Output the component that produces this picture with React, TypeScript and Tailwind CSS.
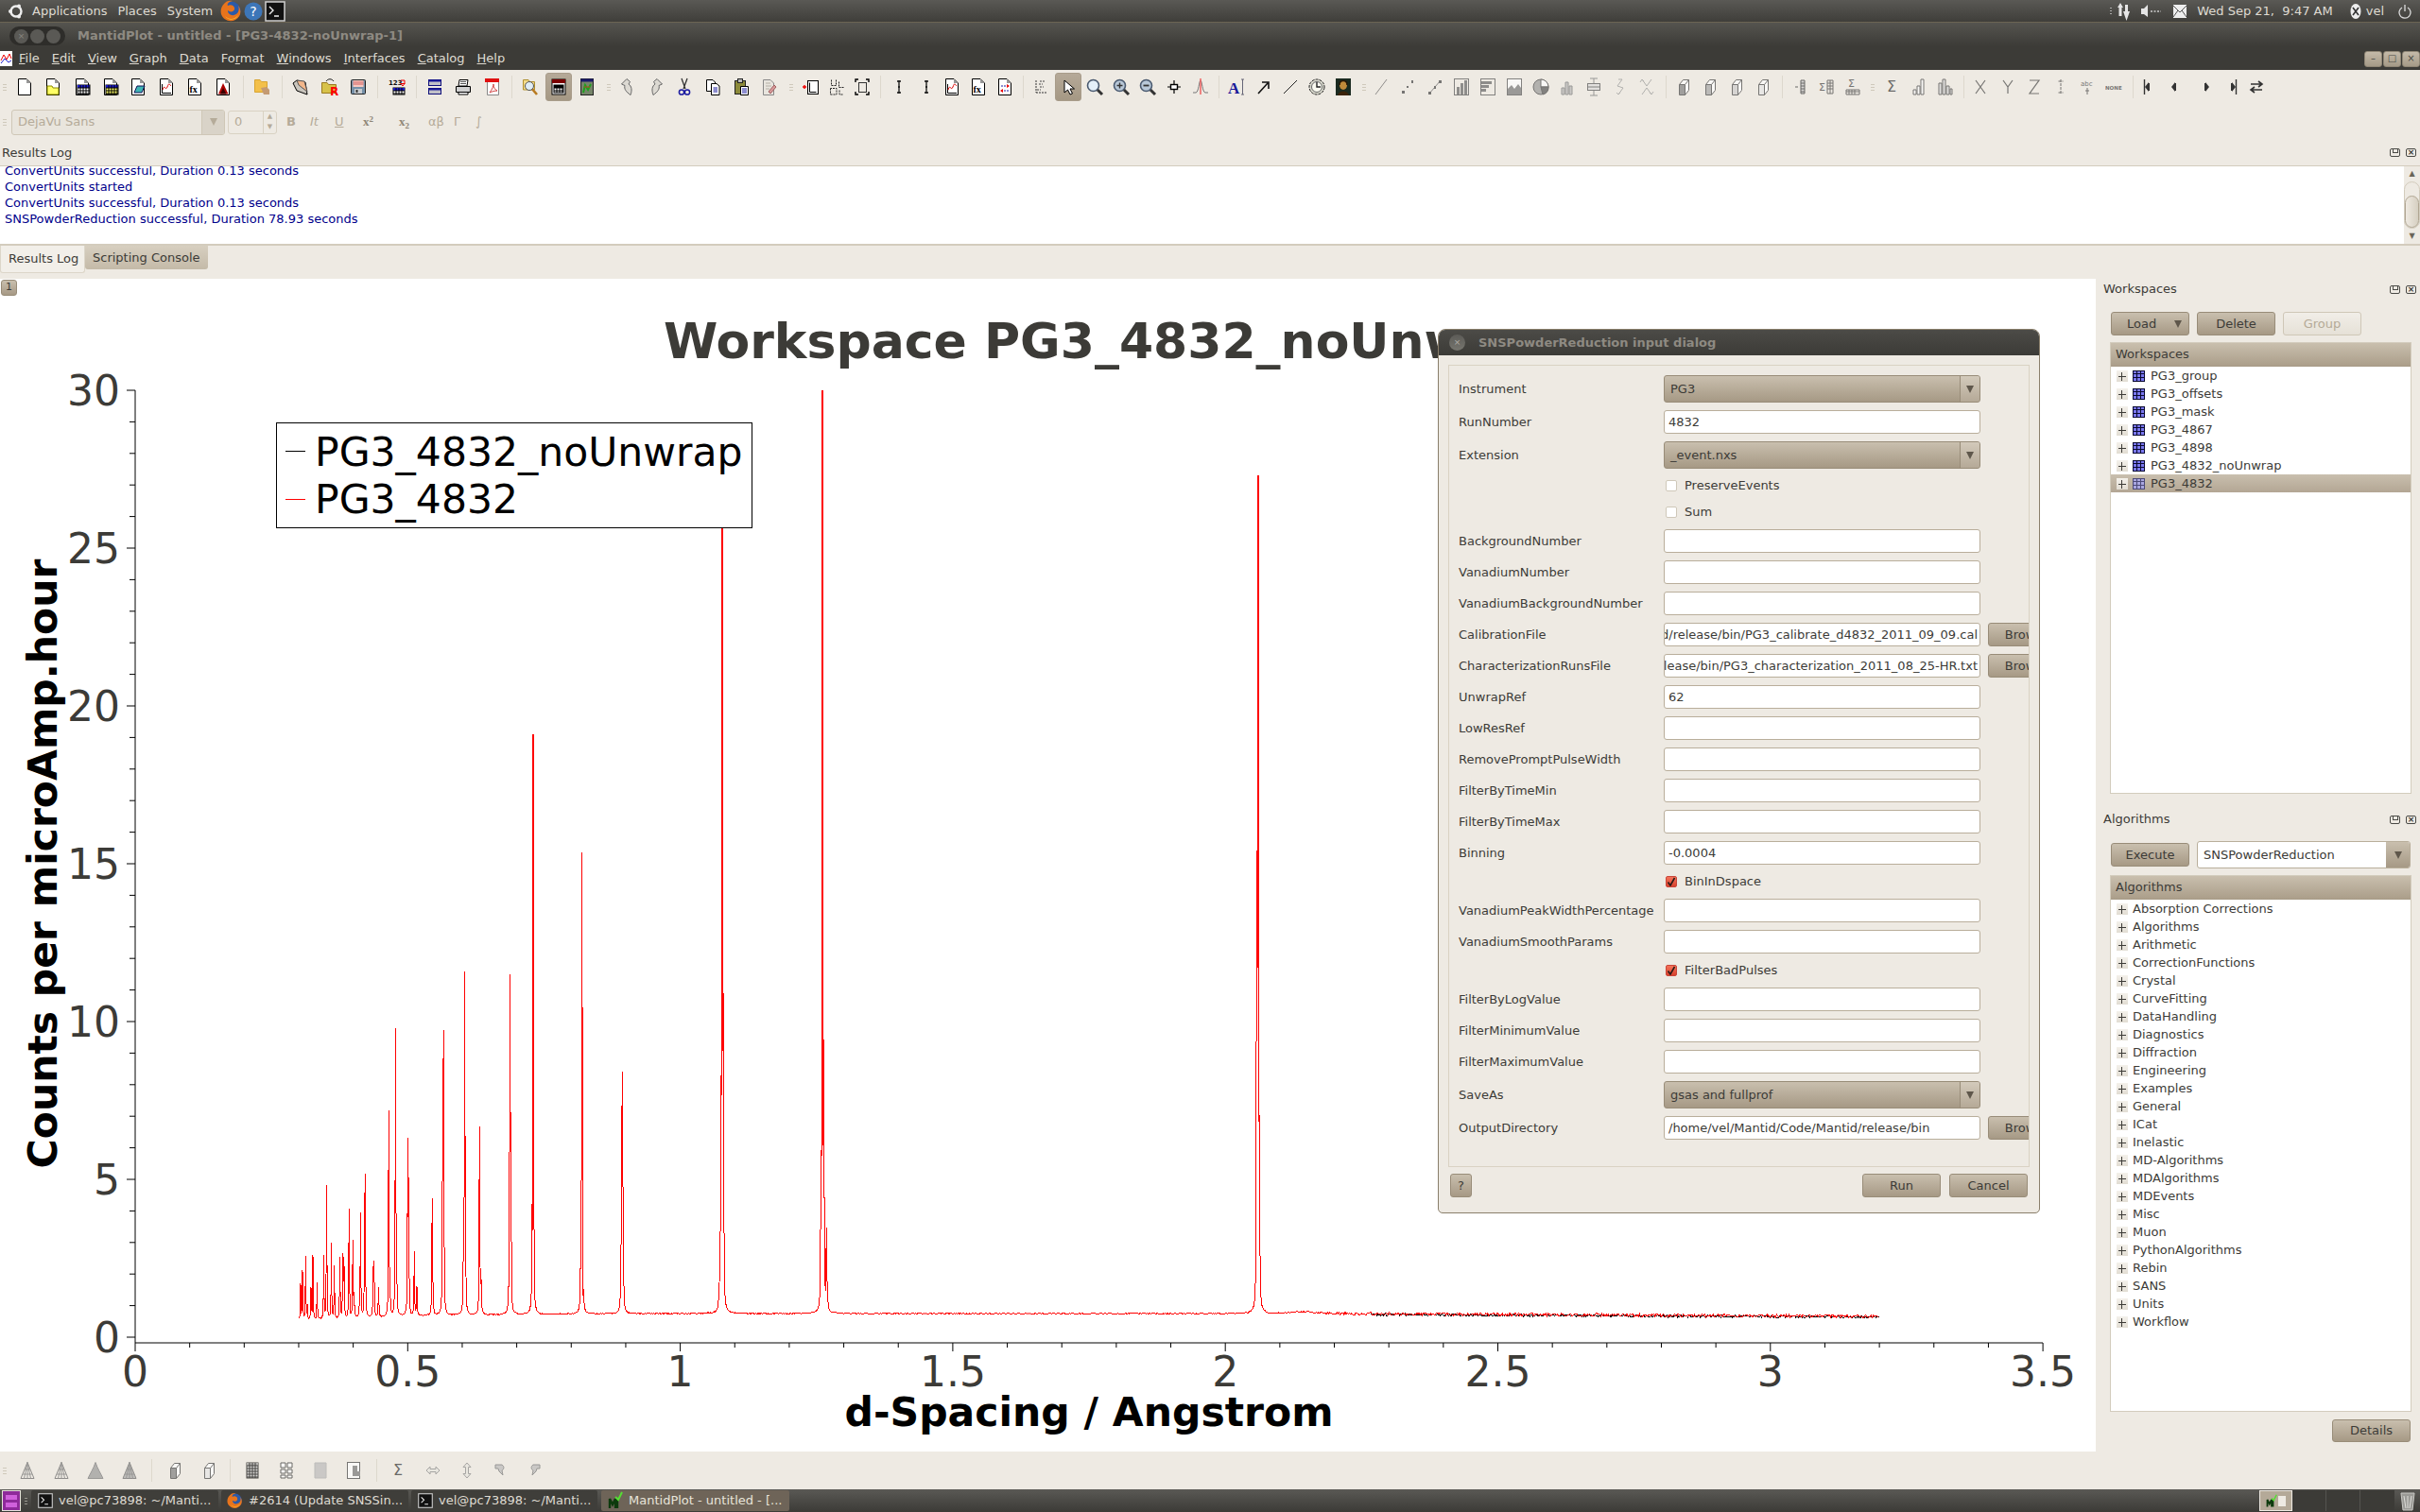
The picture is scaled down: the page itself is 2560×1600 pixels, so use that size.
import React from 'react'

// ---------- small toolbar drawings ----------
const Page = () => (
  <>
    <path d="M3.5 1.5H12L16.5 6V18.5H3.5Z" fill="#fff" stroke="#000" />
    <path d="M12 1.5V6H16.5Z" fill="#999" />
  </>
)
const Cells = ({ x, y, w, h, c, head = '#1a1acc' }: { x: number; y: number; w: number; h: number; c: string; head?: string }) => {
  const lines = []
  for (let i = x + 3; i < x + w; i += 3) lines.push(<path key={'v' + i} d={`M${i} ${y}V${y + h}`} stroke="#000" />)
  for (let j = y + 3; j < y + h; j += 3) lines.push(<path key={'h' + j} d={`M${x} ${j}H${x + w}`} stroke="#000" />)
  return (
    <>
      <rect x={x} y={y} width={w} height={h} fill={c} stroke="#000" />
      <rect x={x} y={y} width={w} height={3} fill={head} />
      {lines}
    </>
  )
}
const Folder = ({ c = '#f3c85a' }: { c?: string }) => <path d="M2.5 5.5H8L9.5 7.5H17.5V16.5H2.5Z" fill={c} stroke="#9a7a20" />
const Glass = ({ c = '#cfe3f5', mark = '' }: { c?: string; mark?: string }) => (
  <>
    <path d="M12.5 12.5L18 18" stroke="#333" strokeWidth="3" />
    <circle cx="8.5" cy="8.5" r="6" fill={c} stroke="#4a5a70" strokeWidth="1.6" />
    {mark === '+' && <path d="M5.5 8.5H11.5M8.5 5.5V11.5" stroke="#333" strokeWidth="1.4" />}
    {mark === '-' && <path d="M5.5 8.5H11.5" stroke="#333" strokeWidth="1.8" />}
  </>
)
const Box3d = ({ c = '#555' }: { c?: string }) => (
  <>
    <path d="M5.5 7.5L9.5 2.5H15.5V13.5L11.5 18.5H5.5Z" fill="#fff" stroke="#444" />
    <path d="M5.5 7.5H11.5L15.5 2.5M11.5 7.5V18.5" fill="none" stroke="#444" />
    <path d="M6 8H11V18H6Z" fill={c} opacity="0.75" />
  </>
)
const Cone = ({ fill = 'none' }: { fill?: string }) => (
  <>
    <path d="M10 1.5L3 18.5H17Z" fill={fill} stroke="#666" />
    <path d="M10 1.5V18.5M10 1.5L6.5 18.5M10 1.5L13.5 18.5M7 9H13M5 14H15" stroke="#777" fill="none" />
  </>
)
const Nav = ({ left, bar }: { left: boolean; bar: boolean }) => (
  <>
    <path d={left ? 'M8 5L4 10L8 15Z' : 'M12 5L16 10L12 15Z'} fill="#333" />
    {bar && <path d={left ? 'M3.5 2V18' : 'M16.5 2V18'} stroke="#333" strokeWidth="1.4" />}
    <path d={left ? 'M8 6V14' : 'M12 6V14'} stroke="#333" strokeWidth="2" />
  </>
)

const icons: Record<string, React.ReactNode> = {
  page: <Page />,
  pfolder: (
    <>
      <Page />
      <path d="M4 9H9L10 11H16V18H4Z" fill="#ffff66" stroke="#8a8a00" />
    </>
  ),
  ptable: (
    <>
      <Page />
      <Cells x={5} y={8} w={13} h={10} c="#fff" />
    </>
  ),
  ptabley: (
    <>
      <Page />
      <Cells x={5} y={8} w={13} h={10} c="#ffff66" />
    </>
  ),
  pnote: (
    <>
      <Page />
      <path d="M6 16L9 9H17L14 16Z" fill="#3fb5b5" stroke="#115" />
    </>
  ),
  pgraph: (
    <>
      <Page />
      <path d="M5.5 7V16.5H15" fill="none" stroke="#000" />
      <path d="M6 13C8 6 9 15 11 10S13 7 15 9" fill="none" stroke="#d00" />
    </>
  ),
  pfx: (
    <>
      <Page />
      <text x="4.5" y="15.5" fontSize="10" fontWeight="bold" fontFamily="'Liberation Serif',serif" fill="#000">fx</text>
    </>
  ),
  psurf: (
    <>
      <Page />
      <path d="M5 17.5L10 6L15.5 17.5Z" fill="#b00000" />
      <path d="M7 17.5L10 11L13.5 17.5Z" fill="#3a0000" />
    </>
  ),
  folderhand: (
    <>
      <path d="M2.5 2.5H8L9.5 4.5H15.5V15.5H2.5Z" fill="#f3c04a" stroke="#d8a430" />
      <path d="M9 11L15 10L18 13V18H12Z" fill="#c49a72" />
    </>
  ),
  folderopen: (
    <>
      <path d="M2 6L6 3L15 5L17 18L6 14Z" fill="#c9c5bd" stroke="#000" />
      <path d="M6 3L14 4L17 15L8 8Z" fill="#f2b68a" stroke="#555" />
    </>
  ),
  folderR: (
    <>
      <Folder c="#d7c24a" />
      <path d="M7 4C9 1 13 1 15 4" fill="none" stroke="#222" />
      <text x="11" y="19" fontSize="12" fontWeight="bold" fill="#f00">R</text>
    </>
  ),
  floppy: (
    <>
      <rect x="2.5" y="2.5" width="15" height="15" rx="1" fill="#7590a8" stroke="#222" />
      <rect x="4.5" y="3" width="11" height="7" fill="#f8c8c0" />
      <path d="M4.5 5H15.5M4.5 7H15.5" stroke="#d06060" />
      <rect x="6" y="12" width="8" height="5" fill="#c8ccd0" />
      <rect x="7.5" y="13" width="2" height="3" fill="#333" />
    </>
  ),
  num: (
    <>
      <text x="0" y="8" fontSize="7" fontWeight="bold" fill="#111">123</text>
      <path d="M13 3H17V7M15 9L17 6.5H13Z" fill="none" stroke="#e00" />
      <Cells x={5} y={11} w={12} h={7} c="#fff" />
    </>
  ),
  bars2: (
    <>
      <rect x="3.5" y="2.5" width="13" height="6" fill="#c0c0c8" stroke="#10107a" />
      <rect x="3.5" y="2.5" width="13" height="2" fill="#1a1a9a" />
      <rect x="3.5" y="11.5" width="13" height="6" fill="#c0c0c8" stroke="#10107a" />
      <rect x="3.5" y="11.5" width="13" height="2" fill="#1a1a9a" />
    </>
  ),
  printer: (
    <>
      <path d="M6 2.5H15L14 9H5Z" fill="#fff" stroke="#000" />
      <path d="M2.5 9.5H17.5V15.5H2.5Z" fill="#d0d0d0" stroke="#000" />
      <path d="M5 15.5H15V18H5Z" fill="#fff" stroke="#000" />
      <path d="M7 4.5H13M7 6.5H13" stroke="#555" />
    </>
  ),
  pdf: (
    <>
      <path d="M4.5 2.5H16.5V18.5H4.5Z" fill="#fff" stroke="#888" />
      <rect x="2" y="1" width="15" height="4" fill="#e01010" />
      <path d="M7 16C10 12 11 9 11 7C11 11 13 13 15 14C12 14 9 15 7 16Z" fill="none" stroke="#d04040" />
    </>
  ),
  find: (
    <>
      <path d="M2.5 2.5H8L9.5 4.5H14.5V13H2.5Z" fill="#f5dc8a" stroke="#b09030" />
      <path d="M11 11L17 18" stroke="#b87a20" strokeWidth="2.6" />
      <circle cx="9" cy="9" r="4.5" fill="#e0edf5" stroke="#555" />
    </>
  ),
  cal: (
    <>
      <rect x="3" y="2" width="14" height="16" fill="#fff" stroke="#000" />
      <rect x="3" y="2" width="14" height="4" fill="#7a0000" />
      <Cells x={5} y={8} w={10} h={8} c="#fff" head="#000" />
    </>
  ),
  mlog: (
    <>
      <rect x="3.5" y="1.5" width="13" height="17" fill="#76856a" stroke="#222" />
      <rect x="3.5" y="1.5" width="13" height="3" fill="#1a1a6a" />
      <path d="M6 16L8 8L11 13L14 7" fill="none" stroke="#1da01d" strokeWidth="2" />
      <path d="M7 10H13" stroke="#c04020" />
    </>
  ),
  undo: <path d="M9 1.5L3.5 7L7 8.5C6 12 8 15 13 18.5C15 13 14 9 11 7L12.5 4.5Z" fill="#dcd9d2" stroke="#666" />,
  redo: <path d="M11 1.5L16.5 7L13 8.5C14 12 12 15 7 18.5C5 13 6 9 9 7L7.5 4.5Z" fill="#dcd9d2" stroke="#666" />,
  cut: (
    <>
      <path d="M7 1L11 12M13 1L9 12" stroke="#333" strokeWidth="1.3" />
      <circle cx="7" cy="15.5" r="2.6" fill="none" stroke="#1a1aa0" strokeWidth="1.5" />
      <circle cx="13" cy="15.5" r="2.6" fill="none" stroke="#1a1aa0" strokeWidth="1.5" />
    </>
  ),
  copy: (
    <>
      <path d="M3.5 2.5H10L12.5 5V14.5H3.5Z" fill="#fff" stroke="#000" />
      <path d="M8.5 6.5H14L17 9V18.5H8.5Z" fill="#fff" stroke="#000" />
      <path d="M10.5 11H15M10.5 13H15M10.5 15H15" stroke="#1a1aa0" />
    </>
  ),
  paste: (
    <>
      <rect x="3.5" y="3.5" width="11" height="14" fill="#8c8a3a" stroke="#222" />
      <rect x="6.5" y="1.5" width="5" height="4" fill="#bbb" stroke="#222" />
      <path d="M9.5 9.5H17.5V18.5H9.5Z" fill="#fff" stroke="#000" />
      <path d="M11 12H16M11 14H16M11 16H16" stroke="#1a1aa0" />
    </>
  ),
  del: (
    <>
      <path d="M4.5 2.5H12L15.5 6V18.5H4.5Z" fill="#e8e5de" stroke="#888" />
      <path d="M7 6H12M7 9H13M7 12H11" stroke="#b5b0a6" />
      <path d="M10 15L16 8L18 10L12 17Z" fill="#d89a9a" stroke="#a06060" />
    </>
  ),
  addlayer: (
    <>
      <rect x="6.5" y="3.5" width="11" height="14" fill="#fff" stroke="#000" />
      <path d="M8.5 5.5V15.5H15.5" fill="none" stroke="#000" />
      <path d="M1 10H5M3 8V12" stroke="#e00" strokeWidth="1.4" />
    </>
  ),
  arrange: <path d="M4.5 2.5V8.5H9.5V2.5M12.5 4.5V10.5H18M3.5 11.5V18M3.5 18H10V11.5H3.5M13 13.5V18H17" fill="none" stroke="#222" strokeDasharray="2 1" />,
  fit: (
    <>
      <rect x="6.5" y="5.5" width="8" height="10" fill="none" stroke="#333" />
      <path d="M3 5V2H6M14 2H17V5M3 15V18H6M14 18H17V15" fill="none" stroke="#000" strokeWidth="1.4" />
    </>
  ),
  ibar: <path d="M10 3V17M8 4H12M8 16H12M9 10H11" stroke="#111" strokeWidth="1.3" />,
  pdata: (
    <>
      <path d="M5 3V16M5 16H16" stroke="#333" strokeDasharray="2 1" />
      <path d="M6 13H10M9 10H13M8 7H12M9 4H14" stroke="#444" strokeDasharray="2 1" />
    </>
  ),
  pswap: (
    <>
      <Page />
      <path d="M6 9H14M6 14H14" stroke="#1a1aa0" strokeDasharray="2 1" />
      <path d="M12 7L15 9L12 11M8 12L5 14L8 16" fill="#e00" />
    </>
  ),
  cursor: <path d="M6 3V16L9.5 13L12 18L14.5 17L12 12H16.5Z" fill="#fff" stroke="#000" />,
  mag: <Glass c="#e4f0fa" />,
  magp: <Glass c="#b8c8d8" mark="+" />,
  magm: <Glass c="#b8c8d8" mark="-" />,
  cross: (
    <>
      <rect x="6.5" y="7.5" width="7" height="5" fill="#fff" stroke="#000" strokeWidth="1.4" />
      <path d="M10 3V7M10 13V17M3 10H6.5M13.5 10H17" stroke="#000" strokeWidth="1.2" />
    </>
  ),
  peak: (
    <>
      <path d="M2 16H5C8 16 8.5 3 10 3S12 16 15 16H18" fill="none" stroke="#777" />
      <path d="M10 1V18" stroke="#ee6060" strokeWidth="1.5" />
    </>
  ),
  atext: (
    <>
      <text x="1" y="17" fontSize="17" fontWeight="bold" fontFamily="'Liberation Serif',serif" fill="#1a1a9a">A</text>
      <path d="M15 2H18M16.5 2V18M15 18H18" stroke="#667" />
    </>
  ),
  arrow: <path d="M4 17L14 6M8 5H15V12" fill="none" stroke="#111" strokeWidth="1.6" />,
  line: <path d="M3 17L17 3" stroke="#222" />,
  clock: (
    <>
      <circle cx="10" cy="10" r="8" fill="#d8d8cc" stroke="#222" strokeDasharray="3 1" />
      <circle cx="10" cy="10" r="5.5" fill="#fafaf0" stroke="#666" />
      <path d="M10 5V10H14" fill="none" stroke="#222" strokeWidth="1.4" />
    </>
  ),
  mona: (
    <>
      <rect x="2" y="1" width="16" height="18" fill="#1a2a20" />
      <ellipse cx="10" cy="8" rx="4" ry="5" fill="#c08a3a" />
      <path d="M4 19C5 13 15 13 16 19Z" fill="#3a2208" />
      <path d="M6 8C6 2 14 2 14 8" fill="none" stroke="#2a1806" strokeWidth="1.5" />
    </>
  ),
  gline: <path d="M4 18L16 2" stroke="#666" />,
  gdots: <path d="M4 17H7V14H4ZM9 11H11V9H9ZM14 6H16V3H14Z" fill="#444" />,
  gdline: (
    <>
      <path d="M4 17L16 3" stroke="#666" />
      <path d="M3 18H6V15H3ZM9 12H11V9H9ZM14 6H17V3H14Z" fill="#444" />
    </>
  ),
  gbars: (
    <>
      <rect x="2.5" y="1.5" width="15" height="17" fill="none" stroke="#555" />
      <path d="M5 18V10H8V18ZM9 18V6H12V18ZM13 18V3H16V18Z" fill="#666" />
    </>
  ),
  ghbars: (
    <>
      <rect x="2.5" y="1.5" width="15" height="17" fill="none" stroke="#555" />
      <path d="M3 4H14V7H3ZM3 8H11V11H3ZM3 12H8V15H3Z" fill="#666" />
    </>
  ),
  garea: (
    <>
      <rect x="2.5" y="1.5" width="15" height="17" fill="#fff" stroke="#555" />
      <path d="M3 12L7 8L10 12L14 7L17 11V18H3Z" fill="#777" />
    </>
  ),
  gpie: (
    <>
      <circle cx="10" cy="10" r="8" fill="#999" stroke="#444" />
      <path d="M10 10V2A8 8 0 0 1 18 10Z" fill="#fff" stroke="#444" />
      <path d="M10 10H18A8 8 0 0 1 12 18Z" fill="#555" stroke="#444" />
    </>
  ),
  gstack: <path d="M4 18V11H7V18ZM8 18V5H11V18ZM12 18V9H15V18Z" fill="#bbb" stroke="#777" />,
  gbox: (
    <>
      <path d="M10 1V19M6 1H14M6 19H14" stroke="#777" />
      <rect x="3.5" y="6.5" width="13" height="7" fill="#ddd" stroke="#555" />
      <path d="M3 10H17" stroke="#555" />
    </>
  ),
  gvec: <path d="M12 2L7 9L13 11L8 18M8 2L12 2M6 16L8 18L10 16" fill="none" stroke="#999" />,
  gvec2: <path d="M5 2L10 9L15 2M5 18L10 11L15 18M3 5L5 2L7 4M13 16L15 18L17 15" fill="none" stroke="#999" />,
  box1: <Box3d />,
  box2: <Box3d c="#888" />,
  box3: <Box3d c="#bbb" />,
  box4: <Box3d c="#ddd" />,
  col1: <path d="M5 10H8M11 3V17H15V3ZM11 6H15M11 9H15M11 12H15M11 15H15" fill="#ccc" stroke="#333" />,
  col2: (
    <>
      <text x="2" y="14" fontSize="11" fill="#444">Σ</text>
      <path d="M11 3H17V17H11ZM11 6H17M11 9H17M11 12H17M14 3V17" fill="none" stroke="#444" />
    </>
  ),
  col3: (
    <>
      <text x="5" y="10" fontSize="11" fill="#444">Σ</text>
      <path d="M3 13H17V18H3ZM6 13V18M9 13V18M12 13V18M3 15H17" fill="none" stroke="#444" />
    </>
  ),
  sigma: <text x="4" y="15" fontSize="16" fill="#333">Σ</text>,
  bar1: <path d="M4 18V13H7V18ZM8 18V9H11V18ZM12 18V2H15V18Z" fill="#fff" stroke="#444" />,
  bar2: <path d="M3 18V6H6V18ZM7 18V2H10V18ZM11 18V9H14V18ZM15 18V12H17V18Z" fill="#ddd" stroke="#444" />,
  lx: <path d="M5 3L15 17M15 3L5 17" stroke="#444" strokeWidth="1.2" />,
  ly: <path d="M5 3L10 10L15 3M10 10V17" fill="none" stroke="#444" strokeWidth="1.2" />,
  lz: <path d="M5 3H15L5 17H15" fill="none" stroke="#444" strokeWidth="1.2" />,
  lerr: <path d="M10 2V18M7.5 4H12.5M7.5 16H12.5" stroke="#444" strokeDasharray="3 1" />,
  labc: (
    <>
      <text x="3" y="9" fontSize="7" fill="#444">abc</text>
      <path d="M10 11V18M8 14H12" stroke="#444" />
    </>
  ),
  lnone: <text x="1" y="13" fontSize="5.5" fontWeight="bold" fill="#444">NONE</text>,
  nfirst: <Nav left bar />,
  nprev: <Nav left bar={false} />,
  nnext: <Nav left={false} bar={false} />,
  nlast: <Nav left={false} bar />,
  nswap: <path d="M4 7H15M12 4L16 7L12 10M16 13H5M8 10L4 13L8 16" fill="none" stroke="#333" strokeWidth="1.6" />,
  con1: <Cone />,
  con2: <Cone />,
  con3: <path d="M10 1.5C12 8 16 14 18 18.5H2C4 14 8 8 10 1.5Z" fill="#999" stroke="#777" />,
  con4: <Cone fill="#aaa" />,
  xgrid: <Cells x={4} y={2} w={12} h={16} c="#ccc" head="#999" />,
  xgrid2: <path d="M4 2H9V7H4ZM11 2H16V7H11ZM4 9H9V13H4ZM11 9H16V13H11ZM4 15H9V18H4ZM11 15H16V18H11Z" fill="#fff" stroke="#333" />,
  xgrid3: <path d="M4 2H16V18H4Z" fill="#bbb" stroke="#aaa" />,
  xgrid4: (
    <>
      <rect x="3.5" y="1.5" width="13" height="17" fill="#fff" stroke="#444" />
      <path d="M9 5H14V11H17V16H9Z" fill="#777" />
    </>
  ),
  gw1: <path d="M3 10L7 6V8.5H13V6L17 10L13 14V11.5H7V14Z" fill="#e8e6e0" stroke="#888" />,
  gw2: <path d="M10 2L14 6.5H11.5V13.5H14L10 18L6 13.5H8.5V6.5H6Z" fill="#e8e6e0" stroke="#888" />,
  gw3: <path d="M5 4H12C15 6 14 9 12 10L13 15L9 11L8 8H5Z" fill="#bbb" stroke="#777" />,
  gw4: <path d="M15 4H8C5 6 6 9 8 10L7 15L11 11L12 8H15Z" fill="#bbb" stroke="#777" />,
}

// toolbar item: centre x in the bar + drawing name; '|' is a separator, ':' a grip
type Item = [number, string]

const Tools = ({ items, faded, dim }: { items: Item[]; faded?: string[]; dim?: string }) => {
  let edge = 0
  return (
    <div className="flex items-center">
      {items.map(([cx, name], i) => {
        const thin = name === '|' || name === ':'
        const w = thin ? 4 : 28
        const ml = cx - w / 2 - edge
        edge = cx + w / 2
        if (name === '|')
          return <div key={i} style={{ marginLeft: ml }} className="w-[4px] h-[24px] flex justify-center"><div className="w-px h-full bg-[#ddd8cd]" /></div>
        if (name === ':')
          return (
            <div key={i} style={{ marginLeft: ml }} className="w-[4px] flex flex-col items-center gap-[2px]">
              <div className="w-[4px] h-px bg-[#cfc9bb]" />
              <div className="w-[4px] h-px bg-[#cfc9bb]" />
              <div className="w-[4px] h-px bg-[#cfc9bb]" />
            </div>
          )
        const active = name === 'cal' || name === 'cursor'
        return (
          <div
            key={i}
            style={{ marginLeft: ml }}
            className={
              'w-[28px] h-[30px] flex items-center justify-center rounded-[3px] ' +
              (active ? 'bg-gradient-to-b from-[#b5a998] to-[#a59884] border border-[#a89c8a]' : '')
            }
          >
            <svg width="20" height="20" viewBox="0 0 20 20" className={faded?.includes(name) ? dim : ''}>
              {icons[name]}
            </svg>
          </div>
        )
      })}
    </div>
  )
}

const mainTools: Item[] = [
  [5, ':'], [26, 'page'], [56, 'pfolder'], [87, 'ptable'], [117, 'ptabley'], [146, 'pnote'], [176, 'pgraph'], [206, 'pfx'], [236, 'psurf'], [257, '|'],
  [277, 'folderhand'], [298, '|'], [318, 'folderopen'], [348, 'folderR'], [379, 'floppy'], [399, '|'], [421, 'num'], [440, '|'], [460, 'bars2'], [490, 'printer'], [521, 'pdf'], [541, '|'],
  [561, 'find'], [591, 'cal'], [621, 'mlog'], [644, ':'], [664, 'undo'], [694, 'redo'], [724, 'cut'], [754, 'copy'], [784, 'paste'], [813, 'del'], [837, ':'],
  [858, 'addlayer'], [885, 'arrange'], [912, 'fit'], [931, '|'], [951, 'ibar'], [980, 'ibar'], [1007, 'pgraph'], [1035, 'pfx'], [1063, 'pswap'], [1082, '|'],
  [1101, 'pdata'], [1130, 'cursor'], [1158, 'mag'], [1186, 'magp'], [1214, 'magm'], [1242, 'cross'], [1270, 'peak'], [1289, '|'], [1308, 'atext'], [1337, 'arrow'], [1365, 'line'], [1393, 'clock'], [1421, 'mona'], [1443, ':'],
  [1461, 'gline'], [1489, 'gdots'], [1518, 'gdline'], [1546, 'gbars'], [1574, 'ghbars'], [1602, 'garea'], [1630, 'gpie'], [1658, 'gstack'], [1686, 'gbox'], [1714, 'gvec'], [1742, 'gvec2'], [1762, '|'],
  [1781, 'box1'], [1809, 'box2'], [1837, 'box3'], [1865, 'box4'], [1885, '|'], [1904, 'col1'], [1932, 'col2'], [1960, 'col3'], [1981, ':'], [2002, 'sigma'], [2030, 'bar1'], [2058, 'bar2'], [2077, '|'],
  [2095, 'lx'], [2124, 'ly'], [2152, 'lz'], [2180, 'lerr'], [2208, 'labc'], [2236, 'lnone'], [2256, '|'], [2275, 'nfirst'], [2303, 'nprev'], [2331, 'nnext'], [2359, 'nlast'], [2387, 'nswap'],
]

const bottomTools: Item[] = [
  [5, ':'], [29, 'con1'], [65, 'con2'], [101, 'con3'], [137, 'con4'], [160, '|'], [185, 'box1'], [221, 'box4'], [243, '|'],
  [267, 'xgrid'], [303, 'xgrid2'], [339, 'xgrid3'], [374, 'xgrid4'], [398, '|'], [422, 'sigma'], [458, 'gw1'], [494, 'gw2'], [529, 'gw3'], [566, 'gw4'],
]

// ---------- plot data ----------
const peaks: [number, number][] = [
  [318, 1358], [320, 1344], [323.3, 1329], [325, 1380], [329, 1362], [331, 1328], [335.4, 1357], [342.5, 1328], [345.6, 1254], [350.5, 1315], [353.7, 1339], [359.5, 1330],
  [362.6, 1326], [363.9, 1330], [369.3, 1279], [373.3, 1312], [374.6, 1367], [380.9, 1362], [381.4, 1283], [385.8, 1303], [386.3, 1242], [394.7, 1340], [395.6, 1334], [400.5, 1362],
  [411.2, 1175], [412.6, 1360], [418.4, 1088], [419.3, 1297], [431.3, 1204], [432.2, 1246], [438.3, 1324], [441, 1361], [457.2, 1268], [458.1, 1367], [468.4, 1138], [469.3, 1114],
  [490.3, 1324], [491.6, 1028], [492.2, 1303], [507.2, 1192], [508, 1341], [509, 1353], [538.5, 1362], [539.4, 1031], [540.3, 1185], [563, 1307], [564, 777], [565.3, 1375],
  [614.4, 1319], [615.7, 906], [617, 1371], [656.3, 1370], [657.7, 1170], [658.6, 1134], [659.2, 1328], [761, 1357], [762.6, 1138], [764, 553], [765.2, 1065], [868.6, 1243],
  [870, 413], [871.4, 1100], [874.3, 1299], [875.2, 1363], [1329.6, 900], [1331, 503], [1332.2, 1180],
]

const noise = (seed: number) => {
  const s = Math.sin(seed * 12.9898) * 43758.5453
  return s - Math.floor(s) - 0.5
}

const baseline = (x: number) => {
  if (x < 450) return 1397 - ((x - 316) / 134) * 5
  if (x < 660) return 1392 - ((x - 450) / 210) * 2
  if (x < 1400) return 1390 - 2 * Math.exp(-(((x - 1378) / 18) ** 2))
  return 1390 + ((x - 1400) / 588) * 3
}

const trace = (seed: number) => {
  const xs: number[] = peaks.map((p) => p[0])
  for (let x = 316.5; x <= 1988; x += x < 900 ? 0.8 : 1.1) xs.push(x)
  xs.sort((a, b) => a - b)
  const d = xs.map((x, i) => {
    const exact = peaks.find((p) => p[0] === x)
    let y = baseline(x) + noise(x + seed) * (x > 1400 ? 3.2 : 1)
    if (exact) y = exact[1]
    else
      for (const [px, top] of peaks) {
        const dx = x - px
        if (Math.abs(dx) < 30) y -= ((1390 - top) * 0.09) / (0.09 + dx * dx)
      }
    return (i ? 'L' : 'M') + x.toFixed(1) + ' ' + Math.max(y, 400).toFixed(1)
  })
  return d.join('')
}

// the other run only shows through at the far end of the curve
const tailTrace = () => {
  const pts = []
  for (let x = 1450; x <= 1988; x += 1.1) pts.push(x.toFixed(1) + ' ' + (baseline(x) + 0.8 + noise(x + 3) * 2.4).toFixed(1))
  return 'M' + pts.join('L')
}

const xMajor = [0, 0.5, 1, 1.5, 2, 2.5, 3, 3.5]
const xPos = (v: number) => 143 + v * 576.6
const yPos = (v: number) => 1415 - v * 33.4

const Plot = () => {
  const ticksX = []
  for (let i = 0; i <= 35; i++) {
    const major = i % 5 === 0
    ticksX.push(<path key={i} d={`M${xPos(i / 10)} 1421v${major ? 9 : 5}`} stroke="#000" />)
  }
  const ticksY = []
  for (let i = 0; i <= 30; i++) {
    const major = i % 5 === 0
    ticksY.push(<path key={i} d={`M143 ${yPos(i)}h${major ? -9 : -6}`} stroke="#000" />)
  }
  return (
    <svg width="2217" height="1241" viewBox="0 295 2217 1241" className="block">
      <text x="702" y="379" fontSize="52" fontWeight="bold" fill="#3c3b37">Workspace PG3_4832_noUnwrap</text>
      <path d="M143 413V1421H2161" fill="none" stroke="#000" />
      {ticksX}
      {ticksY}
      {[0, 5, 10, 15, 20, 25, 30].map((v) => (
        <text key={v} x="127" y={yPos(v) + 16} textAnchor="end" fontSize="44" fill="#3c3b37">{v}</text>
      ))}
      {xMajor.map((v) => (
        <text key={v} x={xPos(v)} y="1467" textAnchor="middle" fontSize="44" fill="#3c3b37">{v}</text>
      ))}
      <path d={tailTrace()} fill="none" stroke="#000" strokeWidth="1" shapeRendering="crispEdges" />
      <path d={trace(7)} fill="none" stroke="#f00" strokeWidth="1" shapeRendering="crispEdges" />
      <text x="1152" y="1509" textAnchor="middle" fontSize="42.5" fontWeight="bold" fill="#000">d-Spacing / Angstrom</text>
      <text transform="translate(60 914) rotate(-90)" textAnchor="middle" fontSize="42.5" fontWeight="bold" fill="#000">Counts per microAmp.hour</text>
      <rect x="292.5" y="447.5" width="503" height="111" fill="#fff" stroke="#000" />
      <path d="M302 477.5H323" stroke="#000" />
      <path d="M302 528.5H323" stroke="#f00" />
      <text x="333" y="493" fontSize="42.5" fill="#000">PG3_4832_noUnwrap</text>
      <text x="333" y="543" fontSize="42.5" fill="#000">PG3_4832</text>
    </svg>
  )
}

// ---------- widgets ----------
const btn = 'bg-gradient-to-b from-[#c9bfae] to-[#a69985] border border-[#988c78] rounded-[3px] text-[#3c3b37] flex items-center justify-center shrink-0'

const DropArrow = () => <div className="w-0 h-0 border-l-[4px] border-r-[4px] border-t-[8px] border-l-transparent border-r-transparent border-t-[#5f574b]" />

const FloatIcons = () => (
  <div className="flex items-center gap-[6px] pr-[4px]">
    <div className="w-[11px] h-[9px] border border-[#4a4a46] rounded-[2px] relative">
      <div className="absolute left-[2px] -top-px w-[6px] h-[5px] border border-[#4a4a46] bg-[#eeeae3]" />
    </div>
    <div className="w-[11px] h-[9px] border border-[#4a4a46] rounded-[2px] flex items-center justify-center text-[9px] leading-none font-bold text-[#3c3b37]">×</div>
  </div>
)

const Plus = () => (
  <div className="w-[12px] h-[12px] bg-gradient-to-b from-[#f4f1eb] to-[#e2ddd3] relative shrink-0">
    <div className="absolute left-[2px] right-[2px] top-[6px] h-px bg-[#3c3b37]" />
    <div className="absolute top-[2px] bottom-[1px] left-[5px] w-px bg-[#3c3b37]" />
  </div>
)

const WsGrid = ({ light }: { light?: boolean }) => (
  <svg width="13" height="12" viewBox="0 0 13 12" className="shrink-0">
    <rect width="13" height="12" fill={light ? '#4c4a78' : '#0a0a30'} />
    <path d="M1 1h3v2H1zM5 1h3v2H5zM9 1h3v2H9zM1 4h3v3H1zM5 4h3v3H5zM9 4h3v3H9zM1 8h3v3H1zM5 8h3v3H5zM9 8h3v3H9z" fill={light ? '#a9a6e0' : '#7a78f0'} />
  </svg>
)

const TreeHeader = ({ title }: { title: string }) => (
  <div className="h-[25px] shrink-0 bg-gradient-to-b from-[#c9bfae] to-[#ab9e8a] pl-[5px] flex items-center text-[#3c3b37] border-b border-[#a89c88]">{title}</div>
)

const workspaces = ['PG3_group', 'PG3_offsets', 'PG3_mask', 'PG3_4867', 'PG3_4898', 'PG3_4832_noUnwrap', 'PG3_4832']
const algorithms = [
  'Absorption Corrections', 'Algorithms', 'Arithmetic', 'CorrectionFunctions', 'Crystal', 'CurveFitting', 'DataHandling', 'Diagnostics', 'Diffraction', 'Engineering', 'Examples',
  'General', 'ICat', 'Inelastic', 'MD-Algorithms', 'MDAlgorithms', 'MDEvents', 'Misc', 'Muon', 'PythonAlgorithms', 'Rebin', 'SANS', 'Units', 'Workflow',
]

const RightDock = () => (
  <div className="w-[343px] shrink-0 flex flex-col text-[13px] text-[#3c3b37]">
    <div className="h-[22px] pl-[8px] flex items-center justify-between">
      <span>Workspaces</span>
      <FloatIcons />
    </div>
    <div className="mt-[13px] pl-[16px] flex gap-[8px]">
      <div className={btn + ' w-[83px] h-[25px] !justify-between pl-[16px] pr-[7px]'}>
        <span>Load</span>
        <DropArrow />
      </div>
      <div className={btn + ' w-[83px] h-[25px]'}>Delete</div>
      <div className="w-[83px] h-[25px] flex items-center justify-center border border-[#cfc7b7] rounded-[3px] text-[#b5aa97] bg-gradient-to-b from-[#f1eee8] to-[#e6e1d7]">Group</div>
    </div>
    <div className="mt-[7px] ml-[15px] w-[319px] h-[478px] bg-white border border-[#d3ccbd] flex flex-col">
      <TreeHeader title="Workspaces" />
      {workspaces.map((w, i) => (
        <div key={w} className={'h-[19px] flex items-center pl-[6px] ' + (i === 6 ? 'bg-gradient-to-b from-[#c9bfae] to-[#b3a694]' : '')}>
          <Plus />
          <div className="w-[5px]" />
          <WsGrid light={i === 6} />
          <span className="ml-[6px]">{w}</span>
        </div>
      ))}
    </div>
    <div className="mt-[16px] h-[22px] pl-[8px] flex items-center justify-between">
      <span>Algorithms</span>
      <FloatIcons />
    </div>
    <div className="mt-[12px] pl-[16px] h-[29px] flex items-center gap-[8px]">
      <div className={btn + ' w-[83px] h-[25px]'}>Execute</div>
      <div className="w-[226px] h-[29px] flex bg-white border border-[#b9ae9b] rounded-[3px]">
        <div className="flex-1 pl-[6px] flex items-center">SNSPowderReduction</div>
        <div className="w-[25px] bg-gradient-to-b from-[#c9bfae] to-[#a69985] flex items-center justify-center rounded-r-[2px]"><DropArrow /></div>
      </div>
    </div>
    <div className="mt-[7px] ml-[15px] w-[319px] h-[568px] bg-white border border-[#d3ccbd] flex flex-col">
      <TreeHeader title="Algorithms" />
      {algorithms.map((a) => (
        <div key={a} className="h-[19px] flex items-center pl-[6px] shrink-0">
          <Plus />
          <span className="ml-[5px]">{a}</span>
        </div>
      ))}
    </div>
    <div className="mt-[8px] pr-[10px] flex justify-end">
      <div className={btn + ' w-[83px] h-[24px]'}>Details</div>
    </div>
  </div>
)

type Row =
  | { kind: 'combo'; label: string; value: string }
  | { kind: 'field'; label: string; value?: string; browse?: boolean; right?: boolean }
  | { kind: 'check'; label: string; on?: boolean }

const dialogRows: Row[] = [
  { kind: 'combo', label: 'Instrument', value: 'PG3' },
  { kind: 'field', label: 'RunNumber', value: '4832' },
  { kind: 'combo', label: 'Extension', value: '_event.nxs' },
  { kind: 'check', label: 'PreserveEvents' },
  { kind: 'check', label: 'Sum' },
  { kind: 'field', label: 'BackgroundNumber' },
  { kind: 'field', label: 'VanadiumNumber' },
  { kind: 'field', label: 'VanadiumBackgroundNumber' },
  { kind: 'field', label: 'CalibrationFile', value: '/home/vel/Mantid/Code/Mantid/release/bin/PG3_calibrate_d4832_2011_09_09.cal', browse: true, right: true },
  { kind: 'field', label: 'CharacterizationRunsFile', value: '/home/vel/Mantid/Code/Mantid/release/bin/PG3_characterization_2011_08_25-HR.txt', browse: true, right: true },
  { kind: 'field', label: 'UnwrapRef', value: '62' },
  { kind: 'field', label: 'LowResRef' },
  { kind: 'field', label: 'RemovePromptPulseWidth' },
  { kind: 'field', label: 'FilterByTimeMin' },
  { kind: 'field', label: 'FilterByTimeMax' },
  { kind: 'field', label: 'Binning', value: '-0.0004' },
  { kind: 'check', label: 'BinInDspace', on: true },
  { kind: 'field', label: 'VanadiumPeakWidthPercentage' },
  { kind: 'field', label: 'VanadiumSmoothParams' },
  { kind: 'check', label: 'FilterBadPulses', on: true },
  { kind: 'field', label: 'FilterByLogValue' },
  { kind: 'field', label: 'FilterMinimumValue' },
  { kind: 'field', label: 'FilterMaximumValue' },
  { kind: 'combo', label: 'SaveAs', value: 'gsas and fullprof' },
  { kind: 'field', label: 'OutputDirectory', value: '/home/vel/Mantid/Code/Mantid/release/bin', browse: true },
]

const DialogRow = ({ row }: { row: Row }) => {
  if (row.kind === 'check')
    return (
      <div className="h-[20px] pl-[229px] flex items-center pb-[1px]">
        <div className={'w-[12px] h-[12px] rounded-[2px] flex items-center justify-center border ' + (row.on ? 'bg-gradient-to-b from-[#f4735a] to-[#d8412c] border-[#c9463a]' : 'bg-white border-[#cfc8b9]')}>
          {row.on && (
            <svg width="10" height="10" viewBox="0 0 10 10">
              <path d="M1.5 5.5L4 9L8.5 1" fill="none" stroke="#2a1a18" strokeWidth="1.6" />
            </svg>
          )}
        </div>
        <span className="ml-[8px]">{row.label}</span>
      </div>
    )
  return (
    <div className="flex items-center pl-[10px]">
      <span className="w-[217px] shrink-0 whitespace-nowrap">{row.label}</span>
      {row.kind === 'combo' ? (
        <div className={btn + ' w-[335px] h-[29px] !justify-start'}>
          <span className="flex-1 pl-[6px]">{row.value}</span>
          <div className="w-[21px] h-full border-l border-[#988c78] flex items-center justify-center bg-gradient-to-b from-[#d3cabb] to-[#b5a997] rounded-r-[2px]"><DropArrow /></div>
        </div>
      ) : (
        <>
          <div className={'w-[335px] h-[25px] shrink-0 bg-white border border-[#b9ae9b] rounded-[3px] flex items-center overflow-hidden whitespace-nowrap ' + (row.right ? 'justify-end pr-[2px]' : 'px-[4px]')}>
            <span className="shrink-0">{row.value}</span>
          </div>
          {row.browse && <div className={btn + ' w-[83px] h-[25px] ml-[8px]'}>Browse</div>}
        </>
      )}
    </div>
  )
}

const InputDialog = () => (
  <div className="absolute left-[1521px] top-[348px] w-[637px] h-[936px] bg-[#eeeae3] border border-[#8a7f6b] rounded-t-[8px] rounded-b-[5px] flex flex-col text-[13px] text-[#3c3b37]">
    <div className="h-[27px] shrink-0 bg-gradient-to-b from-[#4c4b47] to-[#3c3b37] rounded-t-[7px] flex items-center pl-[11px]">
      <div className="w-[17px] h-[17px] rounded-full bg-gradient-to-b from-[#5c5b57] to-[#77766f] flex items-center justify-center text-[9px] leading-none text-[#b0ada6]">×</div>
      <span className="ml-[14px] font-bold text-[#8e8a82]">SNSPowderReduction input dialog</span>
    </div>
    <div className="mt-[10px] mx-[10px] h-[849px] border border-[#d9d2c3] overflow-hidden pt-[10px] flex flex-col gap-[8px]">
      {dialogRows.map((r) => (
        <DialogRow key={r.label} row={r} />
      ))}
    </div>
    <div className="mt-[7px] px-[12px] flex">
      <div className={btn + ' w-[23px] h-[25px]'}>?</div>
      <div className="flex-1" />
      <div className={btn + ' w-[83px] h-[25px]'}>Run</div>
      <div className={btn + ' w-[83px] h-[25px] ml-[9px]'}>Cancel</div>
    </div>
  </div>
)

const Firefox = ({ size = 23 }: { size?: number }) => (
  <svg width={size} height={size} viewBox="0 0 23 23">
    <circle cx="11.5" cy="11.5" r="10" fill="#2b5aa8" />
    <path d="M4 4C6 1 10 0 13 1C8 2 7 5 8 6C11 4 16 6 15 10C14 13 10 13 8 11C8 16 14 18 18 14C20 12 20 8 19 6C23 11 22 18 16 21C10 24 3 21 1 15C0 11 1 7 4 4Z" fill="#e8741c" />
    <path d="M5 17C9 21 15 21 19 16C17 21 9 23 5 17Z" fill="#f7c22c" />
  </svg>
)

const Terminal = ({ size = 22 }: { size?: number }) => (
  <svg width={size} height={size} viewBox="0 0 22 22">
    <rect x="1" y="1" width="20" height="20" fill="#111" stroke="#cfcfcf" strokeWidth="1.5" />
    <path d="M5 6L9 10L5 14M10 16H15" fill="none" stroke="#eee" strokeWidth="1.4" />
  </svg>
)

const Mantid = ({ size = 20 }: { size?: number }) => (
  <svg width={size * 0.8} height={size} viewBox="0 0 16 20">
    <path d="M2 18V8L5 14L8 8V18M10 8V18" fill="none" stroke="#0d3a0d" strokeWidth="2.4" />
    <path d="M8 6L11 9L15 1" fill="none" stroke="#55dd33" strokeWidth="2" />
  </svg>
)

const tasks = [
  { w: 'w-[198px]', text: 'vel@pc73898: ~/Manti...', icon: <Terminal size={16} />, ml: 'ml-[4px]' },
  { w: 'w-[198px]', text: '#2614 (Update SNSSin...', icon: <Firefox size={20} />, ml: 'ml-[3px]' },
  { w: 'w-[197px]', text: 'vel@pc73898: ~/Manti...', icon: <Terminal size={16} />, ml: 'ml-[3px]' },
  { w: 'w-[199px]', text: 'MantidPlot - untitled - [...', icon: <Mantid />, ml: 'ml-[4px]', active: true },
]

const menus: [string, string, string][] = [
  ['', 'F', 'ile'], ['', 'E', 'dit'], ['', 'V', 'iew'], ['', 'G', 'raph'], ['', 'D', 'ata'], ['Fo', 'r', 'mat'], ['', 'W', 'indows'], ['', 'I', 'nterfaces'], ['', 'C', 'atalog'], ['', 'H', 'elp'],
]

export default function App() {
  return (
    <div className="relative w-[2560px] h-[1600px] overflow-hidden bg-[#eeeae3] font-['DejaVu_Sans',sans-serif] text-[13px] text-[#3c3b37] flex flex-col">
      {/* top gnome panel */}
      <div className="h-[24px] shrink-0 bg-gradient-to-b from-[#5a5955] to-[#3f3e3a] border-b border-[#6b6453] flex items-center text-[#dfdbd2]">
        <svg width="18" height="18" viewBox="0 0 18 18" className="ml-[8px]">
          <circle cx="9" cy="9" r="5.5" fill="none" stroke="#eee" strokeWidth="2.4" />
          <circle cx="3" cy="9" r="2" fill="#eee" />
          <circle cx="12" cy="3.5" r="2" fill="#eee" />
          <circle cx="12" cy="14.5" r="2" fill="#eee" />
        </svg>
        <span className="ml-[8px]">Applications</span>
        <span className="ml-[11px]">Places</span>
        <span className="ml-[11px]">System</span>
        <div className="ml-[8px] flex items-center gap-[2px]">
          <Firefox />
          <svg width="20" height="20" viewBox="0 0 20 20">
            <circle cx="10" cy="10" r="9.5" fill="#3d76b8" />
            <text x="10" y="15" textAnchor="middle" fontSize="14" fill="#fff">?</text>
          </svg>
          <Terminal />
        </div>
        <div className="flex-1" />
        <div className="flex items-center">
          <svg width="58" height="20" viewBox="0 0 58 20">
            <path d="M3 6v1M3 9v1M3 12v1" stroke="#ccc" strokeWidth="1.5" />
            <path d="M10 6L13 1L16 6H14.5V15H11.5V6ZM23 10H21V3H18V10H16L19.5 20Z" fill="#e5e5e5" />
            <path d="M35 7H38L42 3V16L38 13H35Z" fill="#e5e5e5" />
            <path d="M45 10H56" stroke="#ccc" strokeDasharray="2 1.5" strokeWidth="1.5" />
          </svg>
          <svg width="16" height="16" viewBox="0 0 16 16" className="ml-[10px]">
            <rect x="1" y="1" width="14" height="14" fill="#eee" />
            <path d="M1 2L8 9L15 2M1 14L6 7M15 14L10 7" fill="none" stroke="#555" />
          </svg>
          <span className="ml-[10px] whitespace-nowrap">Wed Sep 21,&nbsp; 9:47 AM</span>
          <svg width="12" height="18" viewBox="0 0 12 18" className="ml-[18px]">
            <ellipse cx="6" cy="9" rx="5.5" ry="8" fill="#eee" />
            <path d="M3 5L9 13M9 5L3 13" stroke="#333" strokeWidth="1.6" />
          </svg>
          <span className="ml-[5px]">vel</span>
          <svg width="14" height="18" viewBox="0 0 14 18" className="ml-[15px] mr-[9px]">
            <path d="M4 5A6 6 0 1 0 10 5M7 2V9" fill="none" stroke="#ddd" strokeWidth="1.3" />
          </svg>
        </div>
      </div>

      {/* window title + menu */}
      <div className="h-[50px] shrink-0 bg-gradient-to-b from-[#55544f] via-[#3c3b37] to-[#3c3b37] flex flex-col">
        <div className="h-[26px] flex items-center pl-[10px] pt-[2px]">
          <div className="w-[59px] h-[20px] rounded-full bg-[#2e2d2a] flex items-center justify-around px-[4px]">
            <div className="w-[15px] h-[15px] rounded-full bg-[#5a5955] flex items-center justify-center text-[9px] leading-none text-[#88867f]">×</div>
            <div className="w-[15px] h-[15px] rounded-full bg-[#5a5955]" />
            <div className="w-[15px] h-[15px] rounded-full bg-[#5a5955]" />
          </div>
          <span className="ml-[13px] font-bold text-[#8e8a82]">MantidPlot - untitled - [PG3-4832-noUnwrap-1]</span>
        </div>
        <div className="h-[24px] flex items-center relative text-[#dfdbd2]">
          <svg width="14" height="16" viewBox="0 0 14 16" className="shrink-0">
            <rect width="13" height="16" fill="#fff" />
            <path d="M1 10L4 4L7 9L10 3L12 8" fill="none" stroke="#e00" />
            <path d="M1 13L5 8L9 12L12 10" fill="none" stroke="#22c" />
          </svg>
          <div className="ml-[6px] flex gap-[13px]">
            {menus.map(([a, u, b]) => (
              <span key={a + u + b}>
                {a}
                <span className="underline">{u}</span>
                {b}
              </span>
            ))}
          </div>
          <div className="ml-auto flex gap-px">
            {['–', '□', '×'].map((g) => (
              <div key={g} className="w-[19px] h-[17px] rounded-[3px] bg-gradient-to-b from-[#c4baa9] to-[#a59a87] border border-[#8f8675] flex items-center justify-center text-[10px] leading-none text-[#4a4a46]">{g}</div>
            ))}
          </div>
        </div>
      </div>

      {/* toolbars */}
      <div className="h-[36px] shrink-0 flex items-center">
        <Tools
          items={mainTools}
          dim="opacity-70"
          faded={['gline', 'gdots', 'gdline', 'gbars', 'ghbars', 'garea', 'gpie', 'gstack', 'gbox', 'gvec', 'gvec2', 'box1', 'box2', 'box3', 'box4', 'col1', 'col2', 'col3', 'sigma', 'bar1', 'bar2', 'lx', 'ly', 'lz', 'lerr', 'labc', 'lnone']}
        />
      </div>
      <div className="h-[38px] shrink-0 flex items-center text-[#b5ab99]">
        <div className="w-[4px] ml-[3px] flex flex-col gap-[2px]">
          <div className="h-px bg-[#cfc9bb]" />
          <div className="h-px bg-[#cfc9bb]" />
          <div className="h-px bg-[#cfc9bb]" />
        </div>
        <div className="ml-[5px] w-[226px] h-[27px] border border-[#cfc7b7] rounded-[3px] flex bg-[#e9e5dd]">
          <span className="flex-1 pl-[6px] flex items-center">DejaVu Sans</span>
          <div className="w-[24px] border-l border-[#cfc7b7] bg-[#d9d3c8] flex items-center justify-center rounded-r-[2px]">
            <div className="w-0 h-0 border-l-[4px] border-r-[4px] border-t-[8px] border-l-transparent border-r-transparent border-t-[#b5ab99]" />
          </div>
        </div>
        <div className="ml-[3px] w-[52px] h-[25px] border border-[#d9d2c3] rounded-[3px] flex">
          <span className="flex-1 pl-[6px] flex items-center">0</span>
          <div className="w-[14px] border-l border-[#d9d2c3] flex flex-col items-center justify-center text-[7px] leading-[11px]">
            <span>▲</span>
            <span>▼</span>
          </div>
        </div>
        <span className="ml-[10px] font-bold w-[25px]">B</span>
        <span className="italic w-[26px]">It</span>
        <span className="underline w-[30px]">U</span>
        <span className="w-[38px] font-['Liberation_Serif',serif] font-bold text-[#8d8576]">x<sup className="text-[9px]">2</sup></span>
        <span className="w-[31px] font-['Liberation_Serif',serif] font-bold text-[#8d8576]">x<sub className="text-[9px]">2</sub></span>
        <span className="w-[27px]">αβ</span>
        <span className="w-[23px]">Γ</span>
        <span>∫</span>
      </div>

      {/* results log dock */}
      <div className="h-[27px] shrink-0 flex items-center justify-between pl-[2px]">
        <span>Results Log</span>
        <FloatIcons />
      </div>
      <div className="h-[85px] shrink-0 flex border-t border-b-2 border-[#d3ccbd] overflow-hidden">
        <div className="flex-1 bg-white pl-[5px] text-[#00008b] leading-[17px] overflow-hidden">
          <div className="-mt-[4px]">ConvertUnits successful, Duration 0.13 seconds</div>
          <div>ConvertUnits started</div>
          <div>ConvertUnits successful, Duration 0.13 seconds</div>
          <div>SNSPowderReduction successful, Duration 78.93 seconds</div>
        </div>
        <div className="w-[17px] flex flex-col items-center text-[8px] leading-none text-[#6a6558] py-[4px]">
          <span>▲</span>
          <div className="flex-1 w-full my-[4px] border border-[#d3ccbd] rounded-full flex flex-col justify-end">
            <div className="h-[34px] rounded-full border border-[#b0a693] bg-gradient-to-r from-[#efeae2] to-[#d6cfc1]" />
          </div>
          <span>▼</span>
        </div>
      </div>
      <div className="h-[35px] shrink-0 flex items-start">
        <div className="w-[90px] h-[29px] pl-[8px] flex items-center bg-[#f2efe9] border border-t-0 border-[#dcd6c9] rounded-b-[3px]">Results Log</div>
        <div className="w-[130px] h-[25px] pl-[8px] flex items-center bg-gradient-to-b from-[#d7cfc0] to-[#c4baa8] rounded-b-[3px]">Scripting Console</div>
      </div>

      {/* plot + right docks */}
      <div className="h-[1241px] shrink-0 flex">
        <div className="relative w-[2217px] h-[1241px] bg-white shrink-0">
          <Plot />
          <div className={btn + ' absolute left-[1px] top-[1px] w-[17px] h-[17px] text-[11px] !rounded-[3px]'}>1</div>
        </div>
        <RightDock />
      </div>

      {/* bottom toolbar */}
      <div className="h-[40px] shrink-0 flex items-center">
        <Tools items={bottomTools} dim="opacity-70" faded={bottomTools.map((t) => t[1])} />
      </div>

      {/* taskbar */}
      <div className="h-[24px] shrink-0 bg-gradient-to-b from-[#5a5955] to-[#3c3b37] flex items-stretch text-[#dfdbd2]">
        <div className="ml-[2px] w-[20px] my-px bg-[#8e2a9a] border border-[#e8e4dc] flex flex-col justify-center gap-[3px] px-[3px]">
          <div className="h-[5px] bg-[#d060dc]" />
          <div className="h-[5px] bg-[#d060dc]" />
        </div>
        <div className="ml-[4px] w-[3px] flex flex-col justify-center gap-[2px]">
          <div className="h-px bg-[#9a9890]" />
          <div className="h-px bg-[#9a9890]" />
          <div className="h-px bg-[#9a9890]" />
        </div>
        {tasks.map((t) => (
          <div
            key={t.text + t.w}
            className={t.ml + ' ' + t.w + ' my-px flex items-center gap-[6px] px-[6px] rounded-[2px] whitespace-nowrap overflow-hidden ' + (t.active ? 'bg-[#6e6458] text-[#e8e4da]' : 'bg-[#3f3e3a]')}
          >
            <span className="w-[17px] h-[20px] flex items-center justify-center shrink-0">{t.icon}</span>
            <span>{t.text}</span>
          </div>
        ))}
        <div className="flex-1" />
        <div className="flex my-px">
          <div className="w-[35px] bg-[#b4a998] border border-[#eeeae3] flex items-center justify-center gap-px">
            <Mantid size={15} />
            <div className="w-[8px] h-[11px] bg-[#eeeae3]" />
          </div>
          <div className="w-[36px] bg-[#3c3b37] border-r border-[#55544f]" />
          <div className="w-[36px] bg-[#3c3b37] border-r border-[#55544f]" />
          <div className="w-[36px] bg-[#3c3b37]" />
        </div>
        <div className="w-[27px] flex items-center justify-center">
          <svg width="18" height="22" viewBox="0 0 18 22">
            <path d="M2 3H16L14 21H4Z" fill="#9a9a96" stroke="#c8c8c4" />
            <path d="M5 6L7 19M9 6V19M13 6L11 19" stroke="#dededa" />
          </svg>
        </div>
      </div>

      <InputDialog />
    </div>
  )
}
